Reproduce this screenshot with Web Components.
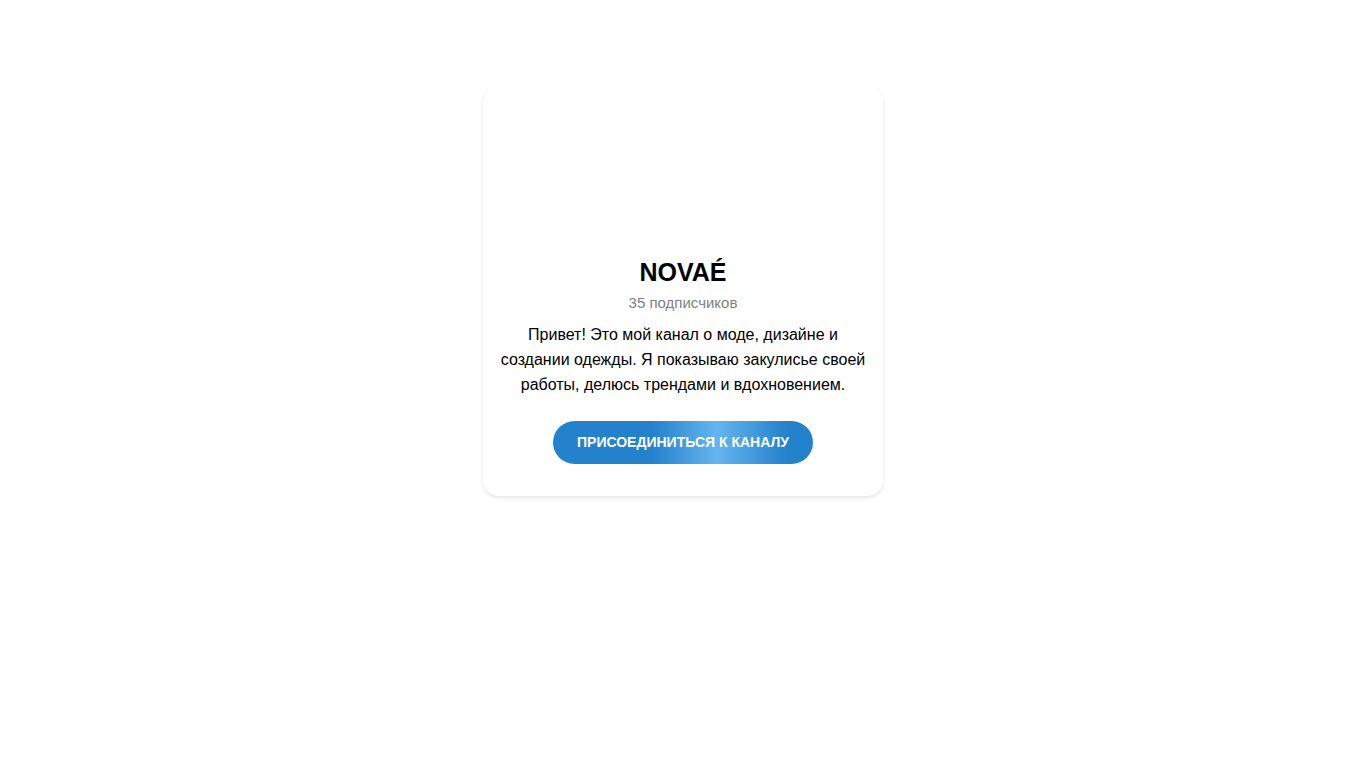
<!DOCTYPE html>
<html lang="ru">
<head>
  <meta charset="UTF-8">
  <meta name="viewport" content="width=device-width, initial-scale=1.0">
  <title>NOVAÉ</title>
  <style>
    body {
      margin: 0;
      background-color: #fff;
      color: #000;
      font-family: "Liberation Sans", Arial, sans-serif;
    }
  </style>
</head>
<body>
  <channel-page>
    <channel-card>
      <span slot="title">NOVAÉ</span>
      <span slot="subscribers">35 подписчиков</span>
      <span slot="description">Привет! Это мой канал о моде, дизайне и создании одежды. Я показываю закулисье своей работы, делюсь трендами и вдохновением.</span>
      <join-button slot="action" href="#join">Присоединиться к каналу</join-button>
    </channel-card>
  </channel-page>

  <script>
    class ChannelPage extends HTMLElement {
      constructor() {
        super();
        this.attachShadow({ mode: "open" });
        this.shadowRoot.innerHTML = `
          <style>
            :host {
              display: block;
            }
            main {
              display: flex;
              justify-content: center;
              padding: 86px 16px 32px;
            }
          </style>
          <main><slot></slot></main>
        `;
      }
    }

    class ChannelCard extends HTMLElement {
      constructor() {
        super();
        this.attachShadow({ mode: "open" });
        this.shadowRoot.innerHTML = `
          <style>
            :host {
              display: block;
              width: 100%;
              max-width: 400px;
            }
            .card {
              display: flex;
              flex-direction: column;
              align-items: center;
              padding: 32px 16px;
              border-radius: 16px;
              background-color: #fff;
              box-shadow: 0 2px 4px rgba(0, 0, 0, 0.1);
              text-align: center;
            }
            .photo {
              width: 120px;
              height: 120px;
              border-radius: 50%;
            }
            h1 {
              margin: 16px 0 0;
              font-size: 25px;
              line-height: 36px;
            }
            .subscribers {
              margin: 4px 0 10px;
              color: #808080;
              font-size: 15px;
              line-height: 18px;
            }
            .description {
              margin: 0 0 24px;
              font-size: 16px;
              line-height: 25px;
            }
          </style>
          <section class="card">
            <div class="photo"></div>
            <h1><slot name="title"></slot></h1>
            <p class="subscribers"><slot name="subscribers"></slot></p>
            <p class="description"><slot name="description"></slot></p>
            <slot name="action"></slot>
          </section>
        `;
      }
    }

    class JoinButton extends HTMLElement {
      static get observedAttributes() {
        return ["href"];
      }
      constructor() {
        super();
        this.attachShadow({ mode: "open" });
        this.shadowRoot.innerHTML = `
          <style>
            :host {
              display: block;
              --button-bg: #2481cc;
              --button-shine: #64b5ef;
            }
            a {
              display: block;
              padding: 12px 24px;
              border-radius: 22px;
              background: linear-gradient(90deg, var(--button-bg) 38%, var(--button-shine) 63%, var(--button-bg) 90%);
              color: #fff;
              font-size: 14px;
              font-weight: bold;
              line-height: 19px;
              text-decoration: none;
              text-transform: uppercase;
            }
          </style>
          <a href="#"><slot></slot></a>
        `;
      }
      attributeChangedCallback(attr, oldVal, newVal) {
        if (attr === "href") {
          this.shadowRoot.querySelector("a").setAttribute("href", newVal);
        }
      }
    }

    customElements.define("channel-page", ChannelPage);
    customElements.define("channel-card", ChannelCard);
    customElements.define("join-button", JoinButton);
  </script>
</body>
</html>
